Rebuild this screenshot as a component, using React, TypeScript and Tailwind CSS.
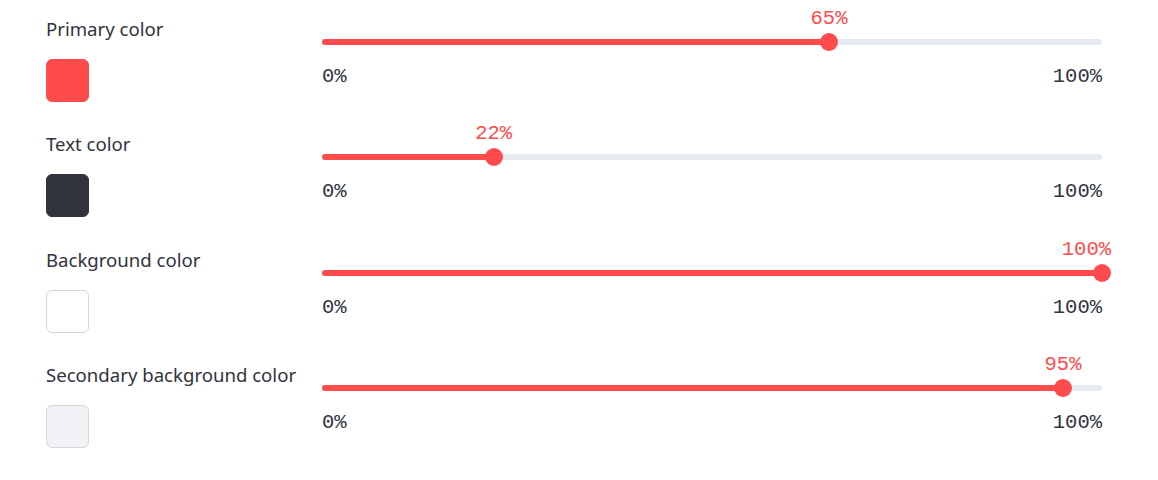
const rows = [
  { label: "Primary color", swatch: "bg-[#ff4b4b] border-[#ff4b4b]", value: 65 },
  { label: "Text color", swatch: "bg-[#31333f] border-[#31333f]", value: 22 },
  { label: "Background color", swatch: "bg-white border-[#d6d6d9]", value: 100 },
  { label: "Secondary background color", swatch: "bg-[#f0f2f6] border-[#d6d6d9]", value: 95 },
];

const mono = { fontFamily: '"Liberation Mono", "DejaVu Sans Mono", monospace' };

function Slider({ value }: { value: number }) {
  const pct = `${value}%`;
  return (
    <div className="w-[780px] pt-[6px]">
      {/* value bubble */}
      <div className="relative h-6">
        <span
          className="absolute top-[1px] text-[20.5px] leading-6 text-[#ff4b4b] whitespace-nowrap"
          style={
            value === 100
              ? { ...mono, right: -9 }
              : { ...mono, left: pct, transform: "translateX(-50%)" }
          }
        >
          {value}%
        </span>
      </div>

      {/* track */}
      <div className="relative mt-[9px] h-[6px] rounded-full bg-[#e6eaf1]">
        <div className="h-full rounded-full bg-[#ff4b4b]" style={{ width: pct }} />
        <div
          className="absolute top-1/2 h-[18px] w-[18px] -translate-x-1/2 -translate-y-1/2 rounded-full bg-[#ff4b4b]"
          style={{ left: pct }}
        />
      </div>

      <div
        className="mt-[20px] flex h-6 justify-between text-[20.5px] leading-6 text-[#31333f]"
        style={mono}
      >
        <span>0%</span>
        <span>100%</span>
      </div>
    </div>
  );
}

export default function App() {
  return (
    <div
      className="min-h-[480px] w-[1158px] bg-white pl-[46px] text-[#31333f]"
      style={{ fontFamily: '"Noto Sans", "Open Sans", sans-serif' }}
    >
      {rows.map((r) => (
        <div key={r.label} className="flex h-[115.4px]">
          <div className="w-[276px] pt-[17px]">
            <div className="h-6 text-[18.6px] leading-6 whitespace-nowrap">{r.label}</div>
            <div className={`mt-[18px] h-[43px] w-[43px] rounded-[6px] border ${r.swatch}`} />
          </div>
          <Slider value={r.value} />
        </div>
      ))}
    </div>
  );
}
